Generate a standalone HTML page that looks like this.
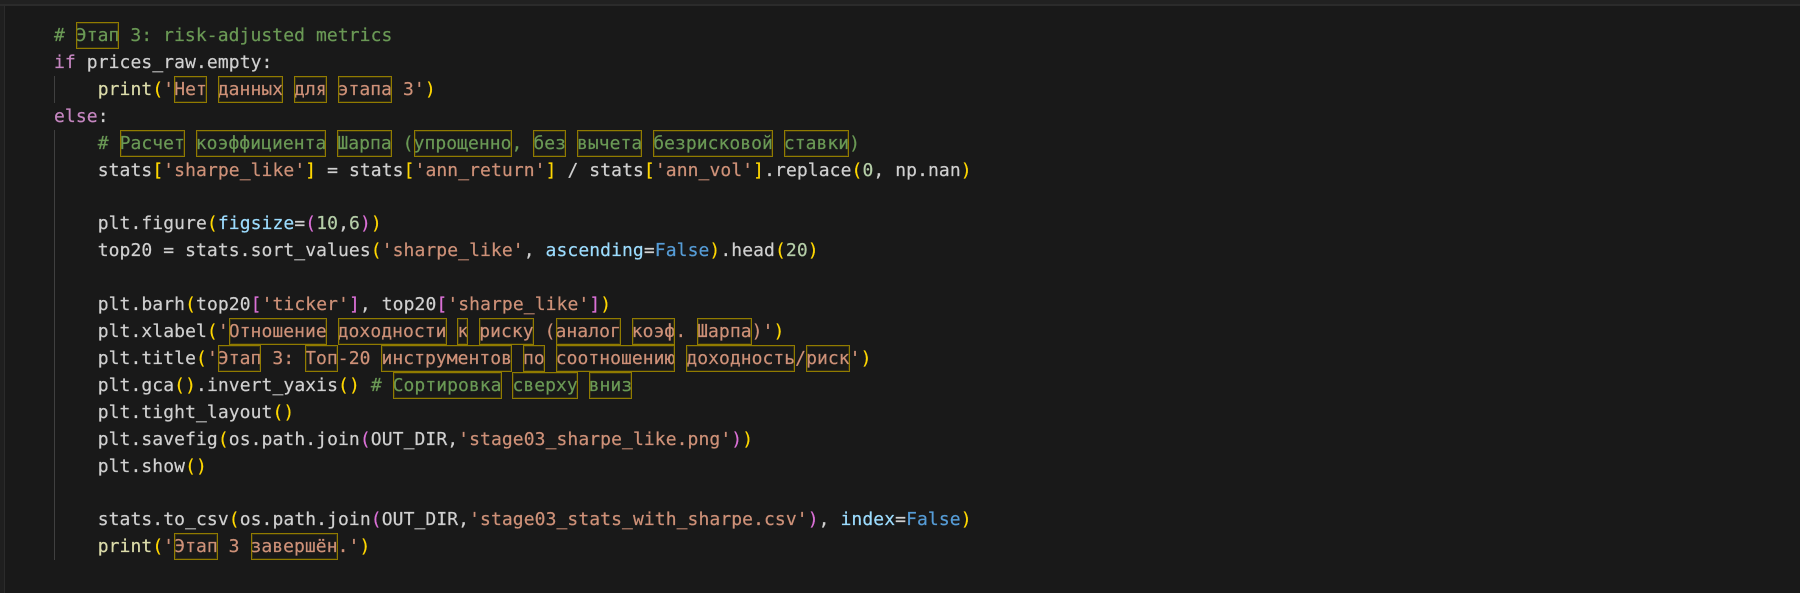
<!DOCTYPE html>
<html lang="ru"><head><meta charset="utf-8"><title>Code</title>
<style>
html,body{margin:0;padding:0;background:#191919}
#p{position:relative;width:1800px;height:593px;overflow:hidden;background:#191919;font:18px/27px "DejaVu Sans Mono","Liberation Mono",monospace;letter-spacing:.085px;color:#d0d0d0;-webkit-text-stroke:.2px}
.l{position:absolute;left:54px;white-space:pre;height:27px}
.c{color:#6a9955}.k{color:#c586c0}.f{color:#dcdcaa}.s{color:#ce9178}.n{color:#b5cea8}.a{color:#9cdcfe}.o{color:#569cd6}
.y{color:#ffd700}.m{color:#da70d6}
.h{position:relative;letter-spacing:.045px}
.h::after{content:"";position:absolute;left:0;right:0;top:-3px;height:27px;box-sizing:border-box;border:1px solid #917b00;box-shadow:inset 0 0 0 1px rgba(145,123,0,.25)}
.g{position:absolute;left:54px;width:1px;background:#404040}
</style></head><body><div id="p">
<div style="position:absolute;left:0;top:0;width:1800px;height:4px;background:#212121"></div>
<div style="position:absolute;left:0;top:4px;width:1800px;height:2px;background:#2b2b2b"></div>
<div style="position:absolute;left:0;top:6px;width:4px;height:587px;background:#1f1f1f"></div>
<div style="position:absolute;left:4px;top:6px;width:1px;height:587px;background:#2b2b2b"></div>
<div class="g" style="top:76px;height:27px"></div>
<div class="g" style="top:130px;height:430px"></div>
<div class="l" style="top:22px"><span class="c"># <span class="h">Этап</span> 3: risk-adjusted metrics</span></div>
<div class="l" style="top:49px"><span class="k">if</span> prices_raw.empty:</div>
<div class="l" style="top:76px">    <span class="f">print</span><span class="y">(</span><span class="s">'<span class="h">Нет</span> <span class="h">данных</span> <span class="h">для</span> <span class="h">этапа</span> 3'</span><span class="y">)</span></div>
<div class="l" style="top:103px"><span class="k">else</span>:</div>
<div class="l" style="top:130px">    <span class="c"># <span class="h">Расчет</span> <span class="h">коэффициента</span> <span class="h">Шарпа</span> (<span class="h">упрощенно</span>, <span class="h">без</span> <span class="h">вычета</span> <span class="h">безрисковой</span> <span class="h">ставки</span>)</span></div>
<div class="l" style="top:157px">    stats<span class="y">[</span><span class="s">'sharpe_like'</span><span class="y">]</span> = stats<span class="y">[</span><span class="s">'ann_return'</span><span class="y">]</span> / stats<span class="y">[</span><span class="s">'ann_vol'</span><span class="y">]</span>.replace<span class="y">(</span><span class="n">0</span>, np.nan<span class="y">)</span></div>
<div class="l" style="top:210px">    plt.figure<span class="y">(</span><span class="a">figsize</span>=<span class="m">(</span><span class="n">10</span>,<span class="n">6</span><span class="m">)</span><span class="y">)</span></div>
<div class="l" style="top:237px">    top20 = stats.sort_values<span class="y">(</span><span class="s">'sharpe_like'</span>, <span class="a">ascending</span>=<span class="o">False</span><span class="y">)</span>.head<span class="y">(</span><span class="n">20</span><span class="y">)</span></div>
<div class="l" style="top:291px">    plt.barh<span class="y">(</span>top20<span class="m">[</span><span class="s">'ticker'</span><span class="m">]</span>, top20<span class="m">[</span><span class="s">'sharpe_like'</span><span class="m">]</span><span class="y">)</span></div>
<div class="l" style="top:318px">    plt.xlabel<span class="y">(</span><span class="s">'<span class="h">Отношение</span> <span class="h">доходности</span> <span class="h">к</span> <span class="h">риску</span> (<span class="h">аналог</span> <span class="h">коэф</span>. <span class="h">Шарпа</span>)'</span><span class="y">)</span></div>
<div class="l" style="top:345px">    plt.title<span class="y">(</span><span class="s">'<span class="h">Этап</span> 3: <span class="h">Топ</span>-20 <span class="h">инструментов</span> <span class="h">по</span> <span class="h">соотношению</span> <span class="h">доходность</span>/<span class="h">риск</span>'</span><span class="y">)</span></div>
<div class="l" style="top:372px">    plt.gca<span class="y">()</span>.invert_yaxis<span class="y">()</span> <span class="c"># <span class="h">Сортировка</span> <span class="h">сверху</span> <span class="h">вниз</span></span></div>
<div class="l" style="top:399px">    plt.tight_layout<span class="y">()</span></div>
<div class="l" style="top:426px">    plt.savefig<span class="y">(</span>os.path.join<span class="m">(</span>OUT_DIR,<span class="s">'stage03_sharpe_like.png'</span><span class="m">)</span><span class="y">)</span></div>
<div class="l" style="top:453px">    plt.show<span class="y">()</span></div>
<div class="l" style="top:506px">    stats.to_csv<span class="y">(</span>os.path.join<span class="m">(</span>OUT_DIR,<span class="s">'stage03_stats_with_sharpe.csv'</span><span class="m">)</span>, <span class="a">index</span>=<span class="o">False</span><span class="y">)</span></div>
<div class="l" style="top:533px">    <span class="f">print</span><span class="y">(</span><span class="s">'<span class="h">Этап</span> 3 <span class="h">завершён</span>.'</span><span class="y">)</span></div>
</div></body></html>
